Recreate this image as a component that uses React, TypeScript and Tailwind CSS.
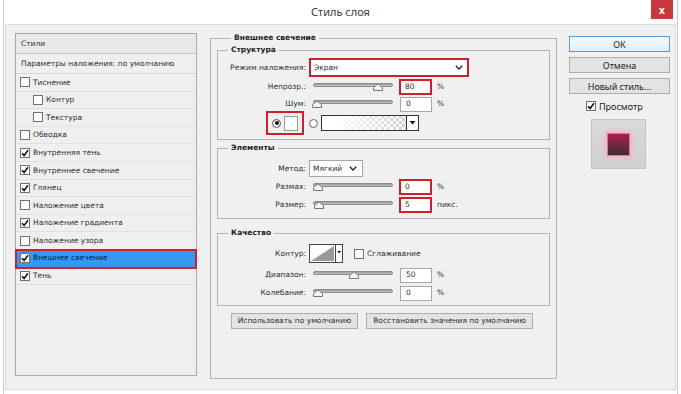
import React from "react";

const items: { t: string; c: boolean; ind?: boolean; sel?: boolean }[] = [
  { t: "Тиснение", c: false },
  { t: "Контур", c: false, ind: true },
  { t: "Текстура", c: false, ind: true },
  { t: "Обводка", c: false },
  { t: "Внутренняя тень", c: true },
  { t: "Внутреннее свечение", c: true },
  { t: "Глянец", c: true },
  { t: "Наложение цвета", c: false },
  { t: "Наложение градиента", c: true },
  { t: "Наложение узора", c: false },
  { t: "Внешнее свечение", c: true, sel: true },
  { t: "Тень", c: true },
];

function Check({ on }: { on: boolean }) {
  return (
    <span className="w-[10px] h-[10px] border border-[#707070] bg-white flex items-center justify-center shrink-0">
      {on && (
        <svg width="8" height="8" viewBox="0 0 8 8">
          <path d="M1 4.2 L3.1 6.4 L7 1.2" stroke="#111" strokeWidth="1.6" fill="none" />
        </svg>
      )}
    </span>
  );
}

function Slider({ left }: { left: number }) {
  return (
    <div className="relative ml-[4px] mb-[5px] w-[80px] h-[4px] rounded-[2px] bg-[linear-gradient(to_bottom,#9a9a9a,#c6c6c6)] border border-[#8c8c8c]">
      <svg className="absolute top-[-1px]" style={{ left: left - 5 }} width="10" height="8" viewBox="0 0 10 8">
        <path d="M0.5 7.5 V4.6 L5 0.8 L9.5 4.6 V7.5 Z" fill="#f3f3f3" stroke="#777" strokeWidth="1" />
      </svg>
    </div>
  );
}

function NumBox({ v, red }: { v: string; red?: boolean }) {
  return red ? (
    <div className="ml-[6px] w-[33px] h-[16px] border-2 border-[#cf1f2b] bg-white flex items-center pl-[4px]">{v}</div>
  ) : (
    <div className="ml-[7px] w-[32px] h-[15px] border border-[#a6a6a6] bg-white flex items-center pl-[5px]">{v}</div>
  );
}

function Chevron() {
  return (
    <svg width="8" height="5" viewBox="0 0 8 5">
      <path d="M0.8 0.8 L4 4 L7.2 0.8" stroke="#222" strokeWidth="1.3" fill="none" />
    </svg>
  );
}

function Label({ t }: { t: string }) {
  return <div className="w-[88px] text-right shrink-0">{t}</div>;
}

const F = "font-['DejaVu_Sans',sans-serif] text-[7.5px] leading-none text-[#2e2e2e]";
const LEG = "px-[3px] ml-[10px] font-bold leading-[10px] text-[#1e1e1e]";

export default function App() {
  return (
    <div className="w-[681px] h-[394px] bg-white overflow-hidden">
      <div className="mx-[3px] h-full border-x border-[#cbcbcb] flex flex-col">
        <div className="relative h-[24px] shrink-0 flex items-center justify-center">
          <span className="font-['Noto_Sans',sans-serif] text-[11px] text-[#3a3a3a]">Стиль слоя</span>
          <div className="absolute right-[4px] top-0 w-[22px] h-[19px] bg-[#c8393b] flex items-center justify-center">
            <span className="font-['Noto_Sans',sans-serif] text-[10px] leading-none text-white font-bold">x</span>
          </div>
        </div>
        <div className={"mx-[1px] h-[366px] bg-[#f0f0f0] border border-[#dcdcdc] flex pt-[8px] pl-[9px] " + F}>
          {/* Left panel */}
          <div className="w-[182px] h-[343px] border border-[#a9a9a9] bg-[#efefef] flex flex-col shrink-0">
            <div className="h-[20px] border-b border-[#c9c9c9] bg-[#e8e8e8] flex items-center pl-[5px]">Стили</div>
            <div className="h-[20px] border-b border-[#d6d6d6] flex items-center pl-[5px]">Параметры наложения: по умолчанию</div>
            {items.map((it) => (
              <div
                key={it.t}
                className={
                  "h-[17.6px] flex items-center gap-[3px] border-b " +
                  (it.ind ? "pl-[17px] " : "pl-[4px] ") +
                  (it.sel
                    ? "bg-[#3897f2] border-[#3897f2] outline-2 -outline-offset-1 outline-[#d0202c] relative text-[#0c1a33]"
                    : "border-[#e1e1e1]")
                }
              >
                <Check on={it.c} />
                <span>{it.t}</span>
              </div>
            ))}
          </div>

          {/* Middle */}
          <fieldset className="ml-[13px] w-[347px] h-[346px] border border-[#b4b4b4] px-[6px] shrink-0">
            <legend className={LEG + " ml-[14px]"}>Внешнее свечение</legend>

            <fieldset className="mt-[2px] w-[333px] border border-[#b4b4b4] pt-[3px] pb-[4px]">
              <legend className={LEG}>Структура</legend>
              <div className="flex items-center h-[19px]">
                <Label t="Режим наложения:" />
                <div className="ml-[3px] w-[160px] h-[19px] border-2 border-[#cf1f2b] bg-white flex items-center justify-between pl-[3px] pr-[4px]">
                  <span>Экран</span>
                  <Chevron />
                </div>
              </div>
              <div className="flex items-center h-[16px] mt-[2px]">
                <Label t="Непрозр.:" />
                <div className="ml-[3px] flex items-center">
                  <Slider left={64} />
                  <NumBox v="80" red />
                  <span className="ml-[5px]">%</span>
                </div>
              </div>
              <div className="flex items-center h-[16px] mt-[1px]">
                <Label t="Шум:" />
                <div className="ml-[3px] flex items-center">
                  <Slider left={3} />
                  <NumBox v="0" />
                  <span className="ml-[5px]">%</span>
                </div>
              </div>
              <div className="flex items-center h-[24px] -mt-[1px]">
                <div className="w-[86px] flex justify-end shrink-0">
                  <div className="w-[38px] h-[24px] border-2 border-[#cf1f2b] flex items-center pl-[4px] gap-[3px]">
                    <span className="w-[9px] h-[9px] rounded-full border border-[#555] bg-white flex items-center justify-center">
                      <span className="w-[4px] h-[4px] rounded-full bg-[#111]" />
                    </span>
                    <span className="w-[14px] h-[15px] border border-[#9a9a9a] bg-white" />
                  </div>
                </div>
                <div className="ml-[5px] flex items-center">
                  <span className="w-[9px] h-[9px] rounded-full border border-[#666] bg-white" />
                  <svg className="ml-[3px]" width="98" height="16" viewBox="0 0 98 16">
                    <defs>
                      <pattern id="chk" width="6" height="6" patternUnits="userSpaceOnUse">
                        <rect width="6" height="6" fill="#fff" />
                        <rect width="3" height="3" fill="#cfcfcf" />
                        <rect x="3" y="3" width="3" height="3" fill="#cfcfcf" />
                      </pattern>
                      <linearGradient id="fade" x1="0" x2="1" y1="0" y2="0">
                        <stop offset="0.15" stopColor="#fff" stopOpacity="1" />
                        <stop offset="1" stopColor="#fff" stopOpacity="0" />
                      </linearGradient>
                    </defs>
                    <rect x="0.5" y="0.5" width="85" height="15" fill="url(#chk)" />
                    <rect x="0.5" y="0.5" width="85" height="15" fill="url(#fade)" stroke="#333" />
                    <rect x="85.5" y="0.5" width="12" height="15" fill="#fff" stroke="#333" />
                    <path d="M88.5 6 H94.5 L91.5 9.5 Z" fill="#111" />
                  </svg>
                </div>
              </div>
            </fieldset>

            <fieldset className="mt-[3px] w-[333px] border border-[#b4b4b4] pt-[7px] pb-[5px]">
              <legend className={LEG}>Элементы</legend>
              <div className="flex items-center h-[17px]">
                <Label t="Метод:" />
                <div className="ml-[3px] w-[54px] h-[17px] border border-[#a6a6a6] bg-white flex items-center justify-between pl-[3px] pr-[5px]">
                  <span>Мягкий</span>
                  <Chevron />
                </div>
              </div>
              <div className="flex items-center h-[16px] mt-[2px]">
                <Label t="Размах:" />
                <div className="ml-[3px] flex items-center">
                  <Slider left={4} />
                  <NumBox v="0" red />
                  <span className="ml-[5px]">%</span>
                </div>
              </div>
              <div className="flex items-center h-[16px] mt-[2px]">
                <Label t="Размер:" />
                <div className="ml-[3px] flex items-center">
                  <Slider left={5} />
                  <NumBox v="5" red />
                  <span className="ml-[5px]">пикс.</span>
                </div>
              </div>
            </fieldset>

            <fieldset className="mt-[9px] w-[333px] border border-[#b4b4b4] pt-[6px] pb-[4px]">
              <legend className={LEG}>Качество</legend>
              <div className="flex items-center h-[19px]">
                <Label t="Контур:" />
                <svg className="ml-[3px]" width="34" height="19" viewBox="0 0 34 19">
                  <rect x="0.5" y="0.5" width="33" height="18" fill="#fff" stroke="#444" />
                  <path d="M2 17 L25 2 V17 Z" fill="#9a9a9a" />
                  <line x1="26.5" y1="1" x2="26.5" y2="18" stroke="#444" />
                  <path d="M28.3 7 H32 L30.15 9.4 Z" fill="#111" />
                </svg>
                <span className="ml-[11px]"><Check on={false} /></span>
                <span className="ml-[3px]">Сглаживание</span>
              </div>
              <div className="flex items-center h-[16px] mt-[4px]">
                <Label t="Диапазон:" />
                <div className="ml-[3px] flex items-center">
                  <Slider left={40} />
                  <NumBox v="50" />
                  <span className="ml-[5px]">%</span>
                </div>
              </div>
              <div className="flex items-center h-[16px] mt-[2px]">
                <Label t="Колебание:" />
                <div className="ml-[3px] flex items-center">
                  <Slider left={4} />
                  <NumBox v="0" />
                  <span className="ml-[5px]">%</span>
                </div>
              </div>
            </fieldset>

            <div className="mt-[7px] ml-[14px] flex gap-[8px]">
              <div className="w-[127px] h-[16px] border border-[#adadad] bg-[#e3e3e3] flex items-center justify-center">Использовать по умолчанию</div>
              <div className="w-[167px] h-[16px] border border-[#adadad] bg-[#e3e3e3] flex items-center justify-center">Восстановить значения по умолчанию</div>
            </div>
          </fieldset>

          {/* Right */}
          <div className="ml-[12px] w-[101px] pt-[3px] flex flex-col font-['Noto_Sans',sans-serif] text-[9px] text-[#222]">
            <div className="flex flex-col gap-[5px]">
              <div className="h-[16px] border border-[#5a9bd5] bg-[linear-gradient(to_bottom,#f4f9fd,#e2eef9)] flex items-center justify-center">ОК</div>
              <div className="h-[16px] border border-[#adadad] bg-[#e3e3e3] flex items-center justify-center">Отмена</div>
              <div className="h-[16px] border border-[#adadad] bg-[#e3e3e3] flex items-center justify-center">Новый стиль...</div>
            </div>
            <div className="mt-[6px] ml-[17px] flex items-center gap-[3px] h-[12px]">
              <Check on={true} />
              <span>Просмотр</span>
            </div>
            <div className="mt-[7px] ml-[22px] w-[55px] h-[50px] border border-[#c4c4c4] bg-[linear-gradient(to_bottom,#dadada,#d0d0d0)] flex items-center justify-center">
              <div className="w-[23px] h-[23px] border border-[#d87a98] bg-[linear-gradient(to_bottom,#b01e48,#6a2a40_55%,#43293a)] shadow-[0_0_4px_2px_#f2b4c8]" />
            </div>
          </div>
        </div>
      </div>
    </div>
  );
}
